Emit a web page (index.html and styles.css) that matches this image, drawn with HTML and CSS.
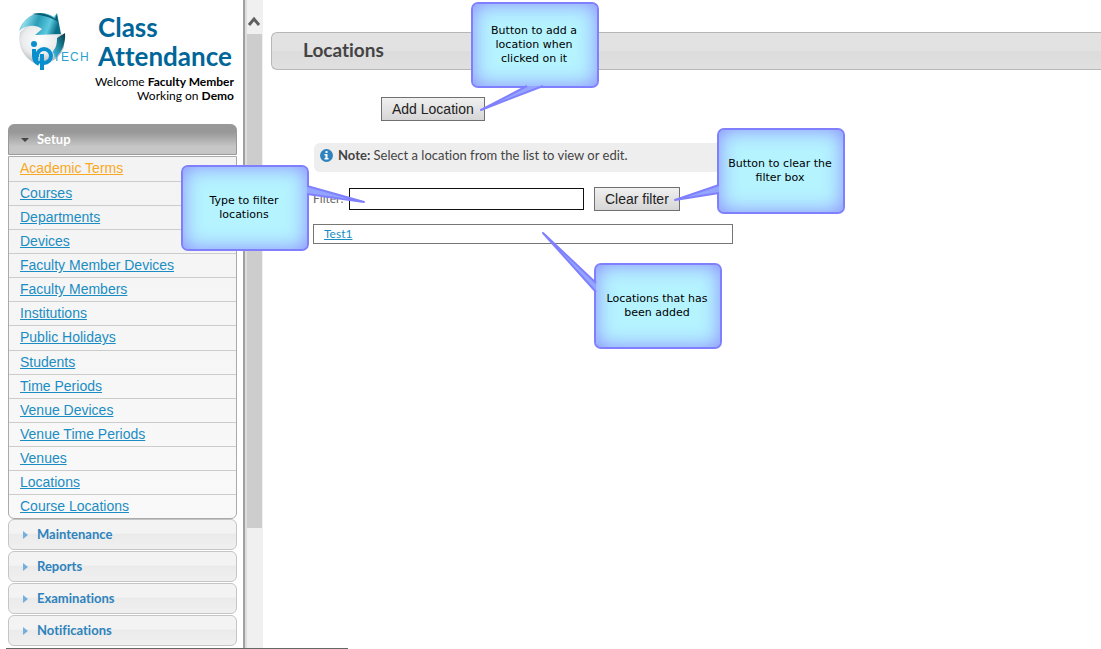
FILE: index.html
```html
<!DOCTYPE html>
<html lang="en">
<head>
<meta charset="utf-8">
<title>Class Attendance - Locations</title>
<link rel="stylesheet" href="styles.css">
</head>
<body>
<div class="frames">
  <aside class="sidebar">
    <header class="brand">
      <svg class="logo" width="72" height="64" viewBox="0 0 72 64" role="img" aria-label="ipTech">
        <defs>
          <radialGradient id="ball" cx=".45" cy=".4" r=".6"><stop offset="0" stop-color="#fff"/><stop offset=".65" stop-color="#e9ebed"/><stop offset="1" stop-color="#b4babe"/></radialGradient>
          <linearGradient id="arrow" x1="0" y1="0" x2="1" y2=".2"><stop offset="0" stop-color="#0d5361"/><stop offset=".2" stop-color="#8fdcec"/><stop offset=".5" stop-color="#2a9db8"/><stop offset=".8" stop-color="#5cc9df"/><stop offset="1" stop-color="#0a6f88"/></linearGradient>
          <linearGradient id="tail" x1="1" y1="0" x2="0" y2="1"><stop offset="0" stop-color="#0a3b45"/><stop offset=".5" stop-color="#1a8299"/><stop offset="1" stop-color="#4cc6dc"/></linearGradient>
        </defs>
        <path d="M2 19C-1 34 6 44 16 50L30 50C38 47 43 42 46 34C47 24 42 16 34 14L10 12Z" fill="url(#ball)"/>
        <path d="M1 18C5 6 13 1 22 0C28 0 33 2 36 4L39 0L43 21L17 22L24 16C17 11 8 12 1 18Z" fill="url(#arrow)"/>
        <path d="M14 1C24 -1 32 2 37 6L39 1L40 9C33 4 24 2 14 1Z" fill="#0b5c70"/>
        <path d="M39 25L47 20C48 30 44 39 37 45L35 38C38 35 39 31 39 25Z" fill="url(#tail)"/>
        <circle cx="16" cy="31" r="3" fill="#0a8fce"/>
        <path d="M16 36V43Q16 49 21 51" fill="none" stroke="#0a8fce" stroke-width="4"/>
        <circle cx="26" cy="43" r="7" fill="none" stroke="#0a8fce" stroke-width="4"/>
        <path d="M24 41V57" stroke="#0a8fce" stroke-width="4"/>
        <path d="M21 44V48" stroke="#fff" stroke-width="1"/>
        <text class="logo-text" x="35" y="48">T</text>
        <text class="logo-text" x="43" y="48">E</text>
        <text class="logo-text" x="52" y="48">C</text>
        <text class="logo-text" x="62" y="48">H</text>
      </svg>
      <div class="brand-text">
        <h1>Class Attendance</h1>
        <p>Welcome <b>Faculty Member</b></p>
        <p>Working on <b>Demo</b></p>
      </div>
    </header>
    <nav class="accordion">
      <button class="section open" type="button" aria-expanded="true"><span class="caret"></span>Setup</button>
      <ul class="links">
        <li><a class="current" href="#">Academic Terms</a></li>
        <li><a href="#">Courses</a></li>
        <li><a href="#">Departments</a></li>
        <li><a href="#">Devices</a></li>
        <li><a href="#">Faculty Member Devices</a></li>
        <li><a href="#">Faculty Members</a></li>
        <li><a href="#">Institutions</a></li>
        <li><a href="#">Public Holidays</a></li>
        <li><a href="#">Students</a></li>
        <li><a href="#">Time Periods</a></li>
        <li><a href="#">Venue Devices</a></li>
        <li><a href="#">Venue Time Periods</a></li>
        <li><a href="#">Venues</a></li>
        <li><a href="#">Locations</a></li>
        <li><a href="#">Course Locations</a></li>
      </ul>
      <button class="section" type="button"><span class="caret"></span>Maintenance</button>
      <button class="section" type="button"><span class="caret"></span>Reports</button>
      <button class="section" type="button"><span class="caret"></span>Examinations</button>
      <button class="section" type="button"><span class="caret"></span>Notifications</button>
    </nav>
  </aside>
  <div class="scrollbar">
    <svg width="15" height="34" viewBox="0 0 15 34" aria-hidden="true"><path d="M2 25L7 19L12 25" fill="none" stroke="#606060" stroke-width="3"/></svg>
    <div class="thumb"></div>
  </div>
  <main class="content">
    <h2 class="page-title">Locations</h2>
    <button class="btn add" type="button">Add Location</button>
    <p class="note">
      <svg width="13" height="13" viewBox="0 0 13 13" aria-hidden="true"><circle cx="6.500" cy="6.500" r="6.500" fill="#2e83bd"/><path d="M5.500 2h2v2h-2zM4.500 5h3v4h1v1.500h-4v-1.500h1v-2.500h-1z" fill="#fff"/></svg>
      <span><b>Note:</b> Select a location from the list to view or edit.</span>
    </p>
    <div class="filter">
      <label for="filter">Filter:</label>
      <input id="filter" type="text">
      <button class="btn" type="button">Clear filter</button>
    </div>
    <ul class="results"><li><a href="#">Test1</a></li></ul>
  </main>
</div>
<div class="frame-edge"></div>

<div class="callout c-add">Button to add a location when clicked on it</div>
<div class="callout c-type">Type to filter locations</div>
<div class="callout c-clear">Button to clear the filter box</div>
<div class="callout c-list">Locations that has been added</div>
<svg class="tails" width="860" height="350" viewBox="0 0 860 350" aria-hidden="true">
  <path d="M527 86L481 110L543 86"/>
  <path d="M307 186L364 202L307 194"/>
  <path d="M719 185L675 200L719 193"/>
  <path d="M596 283L543 233L596 292"/>
</svg>
</body>
</html>
```
FILE: styles.css
```css
* { box-sizing: border-box; }
body {
  margin: 0;
  height: 100vh;
  display: flex;
  flex-direction: column;
  overflow: hidden;
  background: #fff;
  font: 13px/16px Lato, "Open Sans", sans-serif;
  font-variant-ligatures: none;
  color: #444;
}
h1, h2, p, ul { margin: 0; padding: 0; }
ul { list-style: none; }
a { color: #1b8dc3; }
.frames { flex: 1; min-height: 0; display: flex; }
.frame-edge { width: 342px; height: 1px; margin-left: 6px; background: #666; }

.sidebar { width: 243px; flex: none; padding: 13px 6px 0 8px; overflow: hidden; }
.brand { display: flex; justify-content: space-between; height: 111px; padding: 0 3px 0 10px; }
.logo { flex: none; overflow: visible; }
.logo-text { font: 12px "Liberation Sans", sans-serif; fill: #2a9fd0; }
.brand-text { flex: none; width: 144px; color: #000; font-size: 12px; line-height: 14px; text-align: right; white-space: nowrap; }
.brand-text h1 { margin: 0 0 4px 8px; color: #069; font-size: 26px; line-height: 29px; font-weight: 700; text-align: left; white-space: normal; }

.section {
  display: flex;
  align-items: center;
  width: 100%;
  height: 31px;
  margin-bottom: 1px;
  padding: 0 12px 2px;
  border: 1px solid #c5c5c5;
  border-radius: 6px;
  background: linear-gradient(#f3f3f3 0 45%, #ebebeb 50%, #f0f0f0);
  color: #2e83bd;
  font: 700 13px/16px Lato, "Open Sans", sans-serif;
  font-variant-ligatures: none;
}
.section.open {
  border-color: #999;
  border-radius: 6px 6px 0 0;
  background: linear-gradient(#989898 0 25%, #c6c6c6 75%);
  color: #fff;
}
.caret { margin: 2px 9px 0 2px; border: 4px solid transparent; border-width: 4px 0 4px 5px; border-left-color: #72b0dd; }
.open .caret { margin: 2px 8px 0 0; border-width: 4px 4px 0; border-color: #454545 transparent transparent; }

.links {
  display: grid;
  grid-auto-rows: 1fr;
  height: 363px;
  border: 1px solid #aaa;
  border-radius: 0 0 6px 6px;
  background: linear-gradient(#f3f3f3, #f9f9f9);
}
.links li { padding-left: 11px; font: 14px/23px "Liberation Sans", Arial, sans-serif; }
.links li + li { border-top: 1px solid #ccc; }
.links .current { color: #f9a825; }

.scrollbar {
  width: 20px;
  flex: none;
  display: flex;
  flex-direction: column;
  border-left: 2px solid #a0a0a0;
  padding: 0 1px 0 2px;
  background: linear-gradient(90deg, #ddd 0 2px, #f0f0f0 2px);
}
.thumb { height: 494px; background: #cdcdcd; }

.content { flex: 1; min-width: 0; padding: 32px 0 0 8px; }
.page-title {
  height: 38px;
  padding-left: 31px;
  border: 1px solid #b7b7b7;
  border-right: 0;
  border-radius: 6px 0 0 6px;
  background: linear-gradient(#e2e2e2 0 50%, #dcdcdc 50%, #e0e0e0);
  color: #444;
  font-size: 19px;
  line-height: 33px;
  font-weight: 700;
}
.btn {
  height: 24px;
  padding: 0 10px;
  border: 1px solid #707070;
  background: linear-gradient(#f0f0f0, #d6d6d6);
  color: #222;
  font: 14px/20px "Liberation Sans", Arial, sans-serif;
}
.add { display: block; margin: 27px 0 22px 110px; }
.note {
  display: flex;
  align-items: flex-start;
  gap: 5px;
  width: 420px;
  height: 29px;
  margin-left: 43px;
  padding: 4px 6px;
  border-radius: 6px;
  background: #eee;
}
.note svg { flex: none; margin-top: 2px; }
.filter { display: flex; align-items: center; margin: 15px 0 13px 42px; }
.filter label { width: 36px; font-size: 12px; color: #666; }
.filter input { width: 235px; height: 22px; margin-right: 10px; border: 1px solid #111; background: #fff; }
.results { width: 420px; height: 20px; margin-left: 42px; padding-left: 10px; border: 1px solid #767676; font-size: 12px; line-height: 18px; }

.tails { position: absolute; left: 0; top: 0; fill: #93a5ff; stroke: #8080ff; stroke-width: 2; stroke-linejoin: round; pointer-events: none; }
.callout {
  position: absolute;
  display: flex;
  align-items: center;
  justify-content: center;
  width: 128px;
  height: 86px;
  padding: 0 9px 0 7px;
  border: 2px solid #8080ff;
  border-radius: 7px;
  background: #b5f3ff;
  box-shadow: inset 0 0 20px #8c8cff;
  color: #000;
  font: 11px/14px "DejaVu Sans", sans-serif;
  text-align: center;
}
.c-add { left: 471px; top: 2px; }
.c-type { left: 181px; top: 165px; }
.c-clear { left: 717px; top: 128px; }
.c-list { left: 594px; top: 263px; }
```
